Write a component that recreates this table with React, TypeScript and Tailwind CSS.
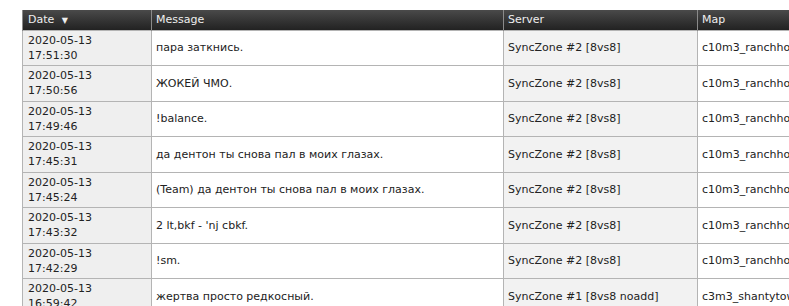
const rows = [
  { date: "2020-05-13", time: "17:51:30", msg: "пара заткнись.", server: "SyncZone #2 [8vs8]", map: "c10m3_ranchhouse" },
  { date: "2020-05-13", time: "17:50:56", msg: "ЖОКЕЙ ЧМО.", server: "SyncZone #2 [8vs8]", map: "c10m3_ranchhouse" },
  { date: "2020-05-13", time: "17:49:46", msg: "!balance.", server: "SyncZone #2 [8vs8]", map: "c10m3_ranchhouse" },
  { date: "2020-05-13", time: "17:45:31", msg: "да дентон ты снова пал в моих глазах.", server: "SyncZone #2 [8vs8]", map: "c10m3_ranchhouse" },
  { date: "2020-05-13", time: "17:45:24", msg: "(Team) да дентон ты снова пал в моих глазах.", server: "SyncZone #2 [8vs8]", map: "c10m3_ranchhouse" },
  { date: "2020-05-13", time: "17:43:32", msg: "2 lt,bkf - 'nj cbkf.", server: "SyncZone #2 [8vs8]", map: "c10m3_ranchhouse" },
  { date: "2020-05-13", time: "17:42:29", msg: "!sm.", server: "SyncZone #2 [8vs8]", map: "c10m3_ranchhouse" },
  { date: "2020-05-13", time: "16:59:42", msg: "жертва просто редкосный.", server: "SyncZone #1 [8vs8 noadd]", map: "c3m3_shantytown" },
];

export default function App() {
  return (
    <div className="w-[789px] h-[306px] overflow-hidden bg-white pt-[10px] pl-[22px] font-['DejaVu_Sans',Verdana,sans-serif] text-[11px] text-[#222]">
      <table className="border-collapse table-fixed w-[900px]">
        <colgroup>
          <col className="w-[129px]" />
          <col className="w-[352px]" />
          <col className="w-[194px]" />
          <col className="w-[225px]" />
        </colgroup>
        <thead>
          <tr className="h-[20px] bg-gradient-to-b from-[#4a4a4a] to-[#222] text-[#eee]">
            <th className="border-x border-[#8a8a8a] px-[5px] text-left font-normal">
              Date <span className="text-[8px] ml-1">▼</span>
            </th>
            <th className="border-x border-[#8a8a8a] px-[4px] text-left font-normal">Message</th>
            <th className="border-x border-[#8a8a8a] px-[4px] text-left font-normal">Server</th>
            <th className="border-x border-[#8a8a8a] px-[4px] text-left font-normal">Map</th>
          </tr>
        </thead>
        <tbody>
          {rows.map((r, i) => (
            <tr key={i} className="h-[35.5px] leading-[15px]">
              <td className="border border-[#b4b4b4] bg-[#efefef] px-[5px]">
                {r.date}
                <br />
                {r.time}
              </td>
              <td className="border border-[#b4b4b4] bg-white px-[4px] whitespace-nowrap">{r.msg}</td>
              <td className="border border-[#b4b4b4] bg-[#f2f2f2] px-[4px] whitespace-nowrap">{r.server}</td>
              <td className="border border-[#b4b4b4] bg-white px-[4px] whitespace-nowrap">{r.map}</td>
            </tr>
          ))}
        </tbody>
      </table>
    </div>
  );
}
